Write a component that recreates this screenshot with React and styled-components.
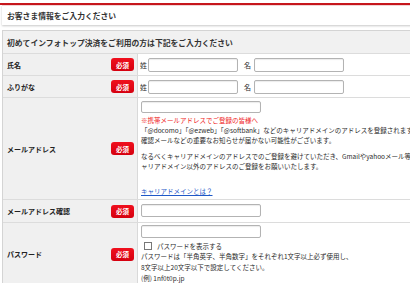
import React from 'react'
import styled, { createGlobalStyle } from 'styled-components'

const GlobalStyle = createGlobalStyle`
  html, body {
    margin: 0;
    padding: 0;
    background: #fff;
    overflow: hidden;
  }
  body {
    font-family: "Noto Sans CJK JP", "Noto Sans", sans-serif;
    color: #333;
  }
`

const Page = styled.div`
  width: 470px;
  padding-top: 3px;
`

const TopRule = styled.div`
  height: 2px;
  background: #c8161d;
`

const TitleBar = styled.div`
  margin: 0 2px;
  height: 19px;
  padding-left: 5px;
  display: flex;
  align-items: center;
  background: #fff;
  border-top: 1px solid #f3d5d6;
  box-shadow: 0 1px 2px rgba(0, 0, 0, 0.22);
  font-size: 7.8px;
  font-weight: bold;
  color: #333;
`

const FormTable = styled.div`
  margin: 5px 0 0 2px;
  border: 1px solid #d4d4d4;
  border-right: none;
`

const Caption = styled.div`
  height: 22px;
  padding-left: 4px;
  display: flex;
  align-items: center;
  background: #f1f1f1;
  border-bottom: 1px solid #dcdcdc;
  font-size: 7.8px;
  font-weight: bold;
  color: #333;
`

const Row = styled.div`
  display: grid;
  grid-template-columns: 135px 1fr;
  border-bottom: 1px solid #dcdcdc;
`

const LabelCell = styled.div`
  display: flex;
  align-items: center;
  justify-content: space-between;
  padding: 0 3px 0 4px;
  background: #f0f0f0;
  border-right: 1px solid #d9d9d9;
  font-size: 7px;
  font-weight: bold;
  color: #222;
`

const Badge = styled.span`
  display: inline-flex;
  align-items: center;
  justify-content: center;
  width: 23px;
  height: 13px;
  border-radius: 3px;
  background: linear-gradient(#f0101e, #d5000f);
  color: #fff;
  font-size: 6.5px;
  font-weight: bold;
`

const ValueCell = styled.div`
  padding: ${p => p.$pad || '3px 3px 4px'};
  font-size: 6.5px;
  line-height: 10px;
  color: #2a2a2a;
  white-space: nowrap;
`

const Inline = styled.div`
  display: flex;
  align-items: center;
`

const NameTag = styled.span`
  font-size: 7px;
  margin: ${p => (p.$gap ? '0 3px 0 6px' : '0 1px 0 0')};
`

const TextInput = styled.div`
  box-sizing: border-box;
  width: ${p => p.$w || 120}px;
  height: ${p => p.$h || 13}px;
  border: 1px solid #b3b3b3;
  border-radius: 2px;
  background: #fff;
  box-shadow: inset 0 1px 1px rgba(0, 0, 0, 0.08);
`

const Warn = styled.div`
  color: #ef1c24;
  margin-top: 2px;
`

const Para = styled.div`
  margin-top: ${p => p.$mt || 0}px;
`

const Link = styled.a`
  display: inline-block;
  margin-top: ${p => p.$mt || 0}px;
  color: #1f58c7;
  text-decoration: underline;
`

const CheckLine = styled.label`
  display: flex;
  align-items: center;
  height: 11px;
  margin-top: 2px;
  padding-left: 3px;
`

const Box = styled.span`
  width: 6px;
  height: 6px;
  border: 1px solid #777;
  background: #fff;
  margin-right: 5px;
`

const HelpLine = styled.div`
  line-height: 11px;
`

const Required = ({ children }) => (
  <LabelCell>
    {children}
    <Badge>必須</Badge>
  </LabelCell>
)

const NameFields = () => (
  <Inline>
    <NameTag>姓</NameTag>
    <TextInput $w={90} $h={14} />
    <NameTag $gap>名</NameTag>
    <TextInput $w={90} $h={14} />
  </Inline>
)

export default function App() {
  return (
    <>
      <GlobalStyle />
      <Page>
        <TopRule />
        <TitleBar>お客さま情報をご入力ください</TitleBar>
        <FormTable>
          <Caption>初めてインフォトップ決済をご利用の方は下記をご入力ください</Caption>
          <Row>
            <Required>氏名</Required>
            <ValueCell $pad="4px 3px 3px 2px">
              <NameFields />
            </ValueCell>
          </Row>
          <Row>
            <Required>ふりがな</Required>
            <ValueCell $pad="4px 3px 3px 2px">
              <NameFields />
            </ValueCell>
          </Row>
          <Row>
            <Required>メールアドレス</Required>
            <ValueCell $pad="3px 3px 3px">
              <TextInput $w={120} $h={12} />
              <Warn>※携帯メールアドレスでご登録の皆様へ</Warn>
              <Para>「@docomo」「@ezweb」「@softbank」などのキャリアドメインのアドレスを登録されますと、購入後の</Para>
              <Para>確認メールなどの重要なお知らせが届かない可能性がございます。</Para>
              <Para $mt={6}>なるべくキャリアドメインのアドレスでのご登録を避けていただき、Gmailやyahooメール等、キ</Para>
              <Para>ャリアドメイン以外のアドレスのご登録をお願いいたします。</Para>
              <Link href="#" $mt={15}>キャリアドメインとは？</Link>
            </ValueCell>
          </Row>
          <Row>
            <Required>メールアドレス確認</Required>
            <ValueCell $pad="4px 3px 5px">
              <TextInput $w={120} $h={13} />
            </ValueCell>
          </Row>
          <Row>
            <Required>パスワード</Required>
            <ValueCell $pad="2px 3px 1px">
              <TextInput $w={120} $h={13} />
              <CheckLine>
                <Box />
                パスワードを表示する
              </CheckLine>
              <HelpLine>パスワードは「半角英字、半角数字」をそれぞれ1文字以上必ず使用し、</HelpLine>
              <HelpLine>8文字以上20文字以下で設定してください。</HelpLine>
              <HelpLine>(例) 1nf0t0p.jp</HelpLine>
            </ValueCell>
          </Row>
        </FormTable>
      </Page>
    </>
  )
}
